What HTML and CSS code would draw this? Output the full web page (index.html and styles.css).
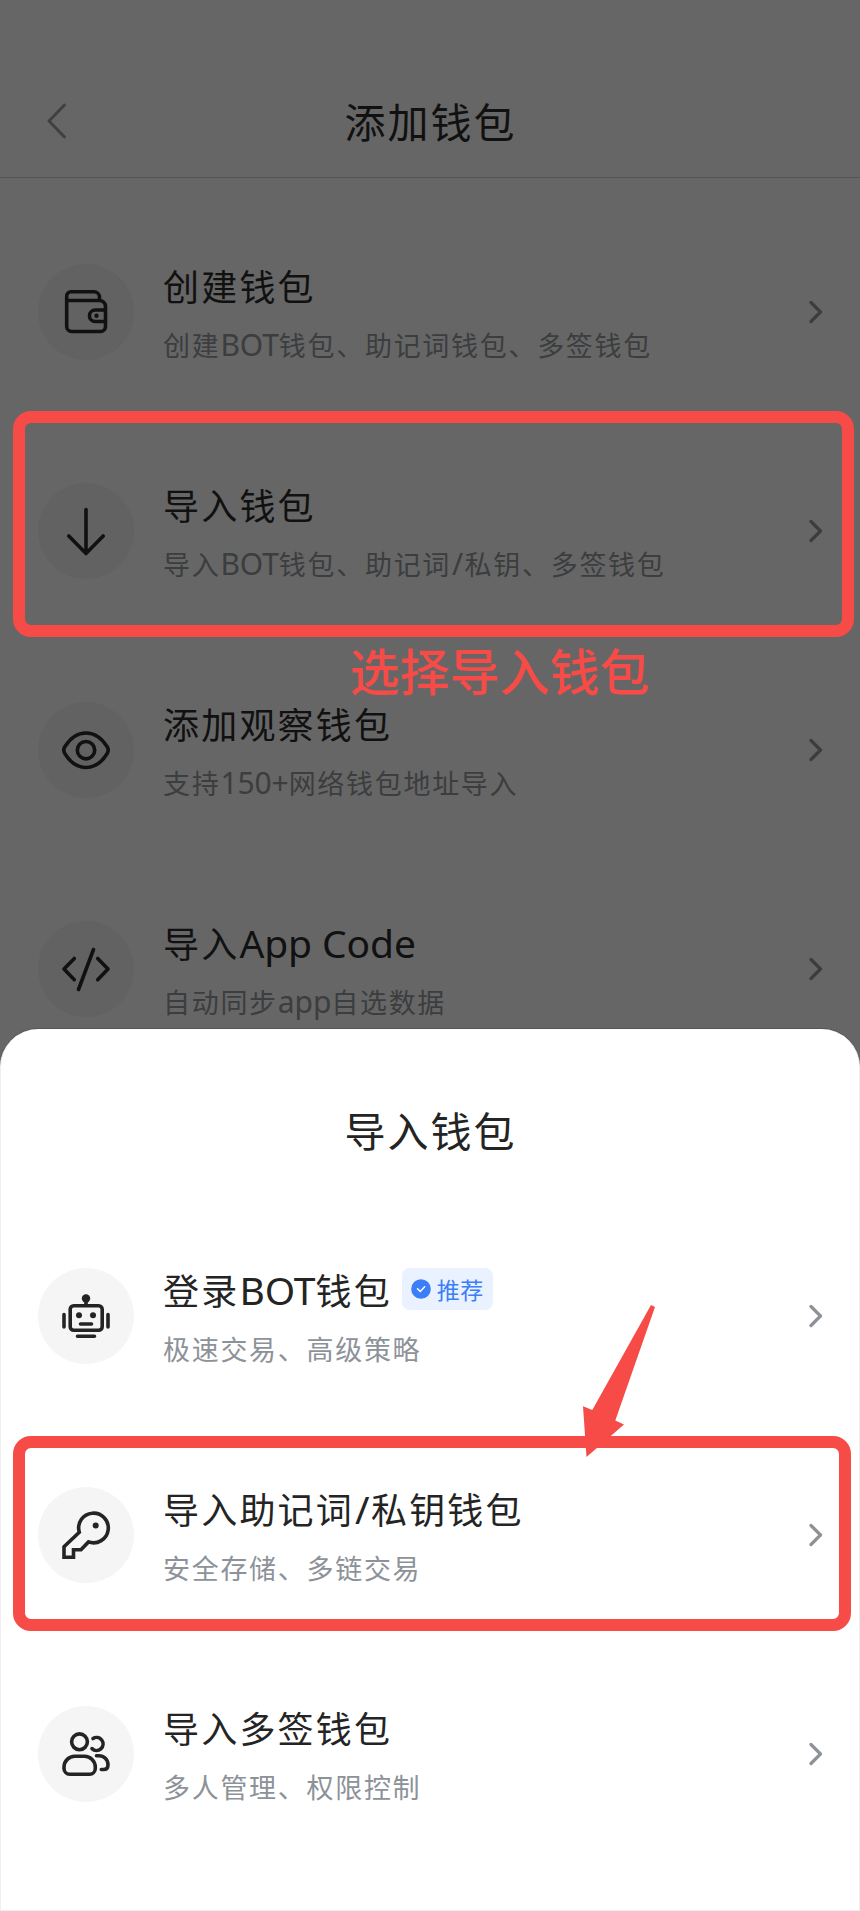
FILE: index.html
```html
<!DOCTYPE html>
<html lang="zh-CN">
<head>
<meta charset="utf-8">
<title>添加钱包</title>
<link rel="stylesheet" href="styles.css">
</head>
<body>
<div class="screen">
  <main class="page">
    <header class="nav">
      <svg class="back" viewBox="0 0 24 40"><path d="M19.500 4L4 20L19.500 36"/></svg>
      <h1 class="heading">添加钱包</h1>
    </header>
    <ul class="list">
      <li class="row">
        <svg class="icon" viewBox="0 0 96 96"><path d="M28.700 36.500V62.500a5 5 0 0 0 5 5H62.500a5 5 0 0 0 5-5V42.500a6 6 0 0 0-6-6H28.700V32a4.200 4.200 0 0 1 4.200-4.200H56a5.500 5.500 0 0 1 5.500 5.500V36.500M67.500 46H57.200a5.700 5.700 0 0 0 0 11.500H67.500"/><circle class="dot" cx="58.500" cy="51.700" r="2.200"/></svg>
        <div class="text"><p class="title">创建钱包</p><p class="sub">创建<span class="latin">BOT</span>钱包、助记词钱包、多签钱包</p></div>
        <svg class="chevron" viewBox="0 0 14 24"><path d="M2 2.500L11.500 12L2 21.500"/></svg>
      </li>
      <li class="row">
        <svg class="icon" viewBox="0 0 96 96"><path d="M48 26.500V70.500M30.800 53L48 70.500L65.200 53"/></svg>
        <div class="text"><p class="title">导入钱包</p><p class="sub">导入<span class="latin">BOT</span>钱包、助记词<span class="latin slash">/</span>私钥、多签钱包</p></div>
        <svg class="chevron" viewBox="0 0 14 24"><path d="M2 2.500L11.500 12L2 21.500"/></svg>
      </li>
      <li class="row">
        <svg class="icon" viewBox="0 0 96 96"><path d="M26.800 44.800C32 36.500 39.500 31 48 31S64 36.500 69.200 44.800Q71.200 48 69.200 51.500C64 60 56.500 65.500 48 65.500S32 60 26.800 51.500Q24.800 48 26.800 44.800Z"/><circle cx="48" cy="48.200" r="8.700"/></svg>
        <div class="text"><p class="title">添加观察钱包</p><p class="sub">支持<span class="latin">150+</span>网络钱包地址导入</p></div>
        <svg class="chevron" viewBox="0 0 14 24"><path d="M2 2.500L11.500 12L2 21.500"/></svg>
      </li>
      <li class="row">
        <svg class="icon" viewBox="0 0 96 96"><path d="M36.300 37.500L26 48L36.300 58.700M59.700 37.500L70 48L59.700 58.700M55.500 28.500L40.500 68.500"/></svg>
        <div class="text"><p class="title">导入<span class="latin">App Code</span></p><p class="sub">自动同步<span class="latin">app</span>自选数据</p></div>
        <svg class="chevron" viewBox="0 0 14 24"><path d="M2 2.500L11.500 12L2 21.500"/></svg>
      </li>
    </ul>
  </main>

  <section class="sheet">
    <h2 class="heading">导入钱包</h2>
    <ul class="list">
      <li class="row">
        <svg class="icon" viewBox="0 0 96 96"><rect x="32.200" y="37.800" width="32" height="24.500" rx="3.500"/><path d="M48 37V31M42.500 56H53.500M26 46.500V59M70 46.500V59M39.500 68.300H56.500"/><circle class="dot" cx="48" cy="30.500" r="4.200"/><circle class="dot" cx="41" cy="47.300" r="3"/><circle class="dot" cx="55" cy="47.300" r="3"/></svg>
        <div class="text"><p class="title">登录<span class="latin">BOT</span>钱包<span class="badge"><svg class="tick" viewBox="0 0 20 20"><circle cx="10" cy="10" r="9.800"/><path d="M6.500 9.800L9.200 12.400L13.700 7.800"/></svg>推荐</span></p><p class="sub">极速交易、高级策略</p></div>
        <svg class="chevron" viewBox="0 0 14 24"><path d="M2 2.500L11.500 12L2 21.500"/></svg>
      </li>
      <li class="row">
        <svg class="icon" viewBox="0 0 96 96"><path class="sharp" d="M41.300 45.200A14.800 14.800 0 1 1 50.500 54.900L43 62.800H35.500V70.200H26V59.800Z"/><circle class="dot" cx="57.700" cy="38.500" r="3"/></svg>
        <div class="text"><p class="title">导入助记词<span class="latin slash">/</span>私钥钱包</p><p class="sub">安全存储、多链交易</p></div>
        <svg class="chevron" viewBox="0 0 14 24"><path d="M2 2.500L11.500 12L2 21.500"/></svg>
      </li>
      <li class="row">
        <svg class="icon" viewBox="0 0 96 96"><circle cx="41.500" cy="35.800" r="7.900"/><path d="M37 50.300H46.500A10.800 10.800 0 0 1 57.300 61.100V62.500A5.700 5.700 0 0 1 51.600 68.200H31.700A5.700 5.700 0 0 1 26 62.500V61.100A10.800 10.800 0 0 1 37 50.300ZM55 32.500A6.500 6.500 0 1 1 54 42.600M58.500 49.700H61A9 9 0 0 1 70 58.700Q70 63.500 65.500 63.500H63.300"/></svg>
        <div class="text"><p class="title">导入多签钱包</p><p class="sub">多人管理、权限控制</p></div>
        <svg class="chevron" viewBox="0 0 14 24"><path d="M2 2.500L11.500 12L2 21.500"/></svg>
      </li>
    </ul>
  </section>

  <div class="mark mark-first"></div>
  <p class="note">选择导入钱包</p>
  <div class="mark mark-second"></div>
  <svg class="pointer" viewBox="0 0 74 153"><path d="M4.500 152L1 101.300L10.300 105L69 0L73 2L33.300 115.500L42 119.500Z"/></svg>
</div>
</body>
</html>
```
FILE: styles.css
```css
* { box-sizing: border-box; margin: 0; padding: 0; }

body { background: #666; }

.screen {
  position: relative;
  width: 860px;
  height: 1911px;
  overflow: hidden;
  background: #666;
  color: #111;
  font-family: "Noto Sans CJK SC", sans-serif;
}

.page { height: 1029px; overflow: hidden; }

.nav {
  display: grid;
  grid-template-columns: 98px 1fr 98px;
  align-items: center;
  height: 178px;
  padding-top: 64px;
  border-bottom: 1px solid #535353;
}

.back { width: 24px; height: 40px; margin-left: 45px; }

.heading {
  padding-left: 1px;
  font-size: 41px;
  font-weight: 400;
  line-height: 60px;
  letter-spacing: 2px;
  text-align: center;
}
.nav .heading { margin-top: -2px; }

.list { padding-top: 24px; list-style: none; }

.row {
  display: grid;
  grid-template-columns: 96px 1fr 14px;
  column-gap: 29px;
  align-items: center;
  height: 219px;
  padding: 0 37px 0 38px;
}

.icon { width: 96px; height: 96px; border-radius: 50%; background: #626262; }
.icon .dot { fill: currentColor; stroke: none; }
.icon .sharp { stroke-linejoin: miter; }
.chevron { width: 14px; height: 24px; color: #3b3d3e; }
.back { color: #404040; }

.icon, .chevron, .back {
  fill: none;
  stroke: currentColor;
  stroke-width: 3.6;
  stroke-linecap: round;
  stroke-linejoin: round;
}
.back { stroke-width: 3; }
.chevron { stroke-width: 3.2; }

.text { padding-top: 2px; }

.title {
  display: flex;
  align-items: baseline;
  height: 50px;
  font-size: 36px;
  line-height: 50px;
  letter-spacing: 2.2px;
  white-space: pre;
}

.sub {
  height: 40px;
  margin-top: 15px;
  font-size: 27px;
  line-height: 40px;
  letter-spacing: 1.7px;
  color: #3b3d3e;
  white-space: nowrap;
}

.latin { font-family: "Noto Sans", sans-serif; font-size: 39px; letter-spacing: -0.1px; }
.sub .latin { font-size: 30px; line-height: 1; letter-spacing: -0.1px; }
.slash { margin: 0 1.5px 0 1px; }

.sheet {
  height: 882px;
  padding-top: 70px;
  border: 1px solid #efefef;
  border-top: 0;
  border-radius: 38px 38px 0 0;
  background: #fff;
  box-shadow: 0 -1px 0 #555;
  color: #242424;
}
.sheet .list { padding-top: 47px; }
.sheet .row { padding: 0 36px 0 37px; }
.sheet .icon { background: #f5f5f5; }
.sheet .sub, .sheet .chevron { color: #8d9299; }

.badge {
  display: flex;
  align-items: center;
  align-self: flex-start;
  gap: 6px;
  height: 42px;
  margin: 4px 0 0 10px;
  padding: 0 9px 0 9px;
  border-radius: 8px;
  background: #eaf1ff;
  color: #3b7ef8;
  font-size: 23px;
  letter-spacing: 0.5px;
}
.tick { width: 20px; height: 20px; fill: #3b7ef8; }
.tick path { fill: none; stroke: #fff; stroke-width: 1.5; stroke-linecap: round; }

/* Tutorial annotations drawn over the interface */
.mark { position: absolute; left: 13px; border: 12px solid #f74b47; border-radius: 18px; }
.mark-first { top: 411px; width: 841px; height: 226px; }
.mark-second { top: 1436px; width: 838px; height: 195px; }

.note {
  position: absolute;
  top: 633px;
  left: 350px;
  font-size: 50px;
  font-weight: 500;
  line-height: 72px;
  color: #f74b47;
  white-space: nowrap;
}

.pointer {
  position: absolute;
  top: 1305px;
  left: 582px;
  width: 74px;
  height: 153px;
  fill: #f74b47;
}
```
